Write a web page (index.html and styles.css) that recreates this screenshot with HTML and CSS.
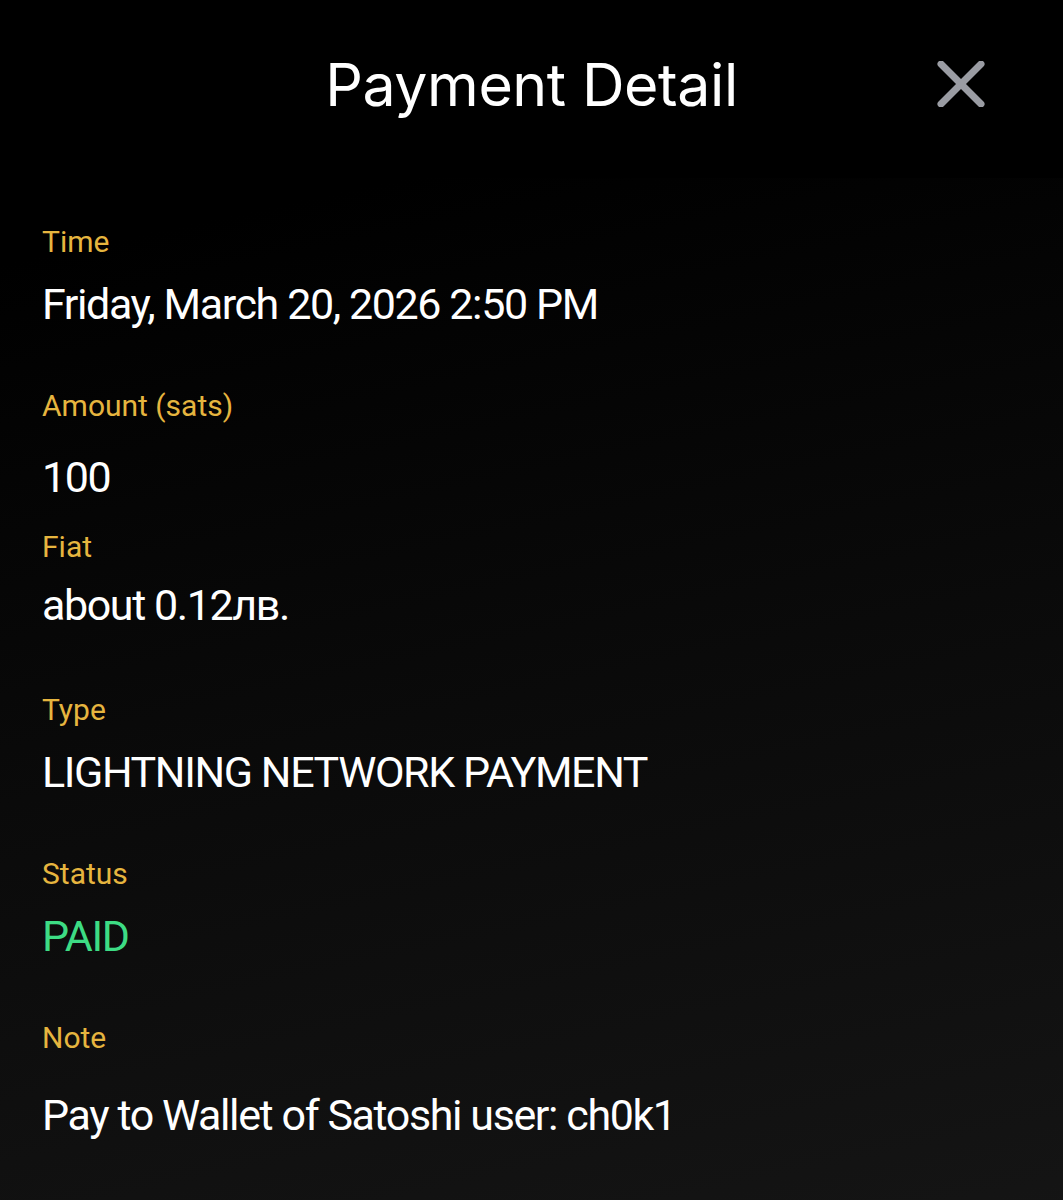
FILE: index.html
```html
<html>
<head>
    <meta name="viewport" content="width=device-width, initial-scale=1">
    <title>Payment Detail</title>
    <link rel="stylesheet" href="styles.css">
</head>
<body>
<div class="screen">
    <div class="header">
        <span></span>
        <h1 class="title">Payment Detail</h1>
        <button class="close" type="button" aria-label="Close">
            <svg width="48" height="46" viewBox="0 0 48 46">
                <line x1="4" y1="3" x2="44" y2="43" />
                <line x1="44" y1="3" x2="4" y2="43" />
            </svg>
        </button>
    </div>
    <div class="details">
        <div class="field">
            <div class="field-label">Time</div>
            <div class="field-value">Friday, March 20, 2026 2:50 PM</div>
        </div>
        <div class="field field-amount">
            <div class="field-label">Amount (sats)</div>
            <div class="field-value">100</div>
        </div>
        <div class="field field-fiat">
            <div class="field-label">Fiat</div>
            <div class="field-value">about 0.12лв.</div>
        </div>
        <div class="field">
            <div class="field-label">Type</div>
            <div class="field-value">LIGHTNING NETWORK PAYMENT</div>
        </div>
        <div class="field">
            <div class="field-label">Status</div>
            <div class="field-value paid">PAID</div>
        </div>
        <div class="field field-note">
            <div class="field-label">Note</div>
            <div class="field-value">Pay to Wallet of Satoshi user: ch0k1</div>
        </div>
    </div>
</div>
</body>
</html>
```

FILE: styles.css
```css
body {margin:0; background:#000; font-family:Inter, "Liberation Sans", sans-serif; color:#fff;}
.screen {min-height:1200px; background:linear-gradient(168deg, #000 18%, #0a0a0a 55%, #151515 100%);}

.header {height:178px; display:grid; grid-template-columns:1fr auto 1fr; align-items:center; background:#000; padding-bottom:10px; box-sizing:border-box;}
.title {margin:0; font-size:59px; font-weight:400; letter-spacing:-0.4px; color:#fff;}
.close {justify-self:end; margin-right:78px; padding:0; border:0; background:none; display:flex;}
.close line {stroke:#9a9ca3; stroke-width:7; stroke-linecap:round;}

.details {padding:46px 42px 40px;}
.field {display:flex; flex-direction:column; margin-bottom:58px;}
.field-label {font-family:Roboto, sans-serif; font-size:30px; line-height:36px; color:#e6b53f;}
.field-value {font-family:Roboto, sans-serif; font-size:43px; line-height:52px; margin-top:18px; letter-spacing:-1.4px;}
.paid {color:#3ddc84;}

.field-amount {margin-bottom:26px;}
.field-amount .field-value {margin-top:27px;}
.field-fiat {margin-bottom:61px;}
.field-fiat .field-value {margin-top:14px;}
.field-note .field-value {margin-top:33px;}
```
